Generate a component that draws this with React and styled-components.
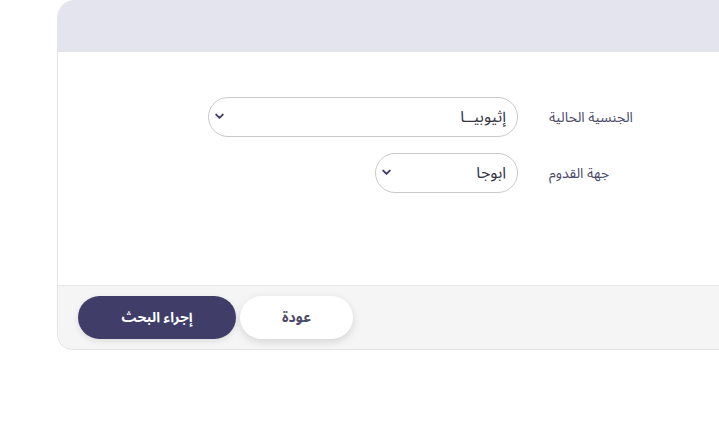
import React from 'react';
import styled, { createGlobalStyle } from 'styled-components';

const arabicFont = `"Noto Sans Arabic", "DejaVu Sans", "Noto Sans", sans-serif`;

const GlobalStyle = createGlobalStyle`
  html, body {
    margin: 0;
    padding: 0;
    background: #ffffff;
  }
  body {
    font-family: ${arabicFont};
  }
`;

const Page = styled.div`
  width: 719px;
  height: 426px;
  padding-left: 57px;
  box-sizing: border-box;
  overflow: hidden;
`;

const Card = styled.div`
  width: 662px;
  direction: rtl;
  border: 1px solid #e4e4e4;
  border-right: none;
  border-top: none;
  border-radius: 18px 0 0 16px;
  overflow: hidden;
  box-sizing: border-box;
`;

const CardHeader = styled.div`
  height: 52px;
  background: #e4e4ee;
`;

const CardBody = styled.div`
  height: 233px;
  box-sizing: border-box;
  padding: 45px 79px 0 0;
  background: #ffffff;
  display: flex;
  flex-direction: column;
  gap: 16px;
`;

const FieldRow = styled.div`
  display: flex;
  align-items: center;
  gap: 31px;
`;

const Label = styled.label`
  width: 91px;
  text-align: left;
  font-size: 14px;
  color: #4b4a68;
  white-space: nowrap;
`;

const SelectWrap = styled.div`
  position: relative;
  width: ${p => p.$width}px;
  height: 40px;
`;

const Select = styled.select`
  appearance: none;
  -webkit-appearance: none;
  width: 100%;
  height: 100%;
  box-sizing: border-box;
  border: 1px solid #c9c9c9;
  border-radius: 20px;
  background: #ffffff;
  padding: 0 11px 0 28px;
  font-family: ${arabicFont};
  font-size: 16px;
  color: #333344;
  direction: rtl;
  outline: none;
`;

const Chevron = styled.svg`
  position: absolute;
  left: 7px;
  top: 16px;
  width: 9px;
  height: 7px;
  pointer-events: none;
`;

const CardFooter = styled.div`
  height: 64px;
  box-sizing: border-box;
  background: #f5f5f5;
  border-top: 1px solid #e6e6e6;
  display: flex;
  align-items: center;
  justify-content: flex-end;
  gap: 4px;
  padding: 0 0 1px 20px;
`;

const Button = styled.button`
  height: 43px;
  width: ${p => p.$width}px;
  border: none;
  border-radius: 22px;
  font-family: ${arabicFont};
  font-size: 14px;
  font-weight: bold;
  cursor: pointer;
  background: ${p => (p.$primary ? '#403e69' : '#ffffff')};
  color: ${p => (p.$primary ? '#ffffff' : '#4b4a68')};
  box-shadow: ${p => (p.$primary ? '0 2px 6px rgba(0,0,0,0.10)' : '0 3px 9px rgba(0,0,0,0.13)')};
`;

const fields = [
  { id: 'nationality', label: 'الجنسية الحالية', value: 'إثيوبيــا', width: 310 },
  { id: 'origin', label: 'جهة القدوم', value: 'ابوجا', width: 143 },
];

function ChevronIcon() {
  return (
    <Chevron viewBox="0 0 9 7">
      <path d="M1.2 1.6 L4.5 4.9 L7.8 1.6" fill="none" stroke="#3f3d68" strokeWidth="1.9" strokeLinecap="round" strokeLinejoin="round" />
    </Chevron>
  );
}

export default function App() {
  return (
    <Page>
      <GlobalStyle />
      <Card>
        <CardHeader />
        <CardBody>
          {fields.map(f => (
            <FieldRow key={f.id}>
              <Label htmlFor={f.id}>{f.label}</Label>
              <SelectWrap $width={f.width}>
                <Select id={f.id} defaultValue={f.value}>
                  <option value={f.value}>{f.value}</option>
                </Select>
                <ChevronIcon />
              </SelectWrap>
            </FieldRow>
          ))}
        </CardBody>
        <CardFooter>
          <Button $width={113}>عودة</Button>
          <Button $primary $width={158}>إجراء البحث</Button>
        </CardFooter>
      </Card>
    </Page>
  );
}
